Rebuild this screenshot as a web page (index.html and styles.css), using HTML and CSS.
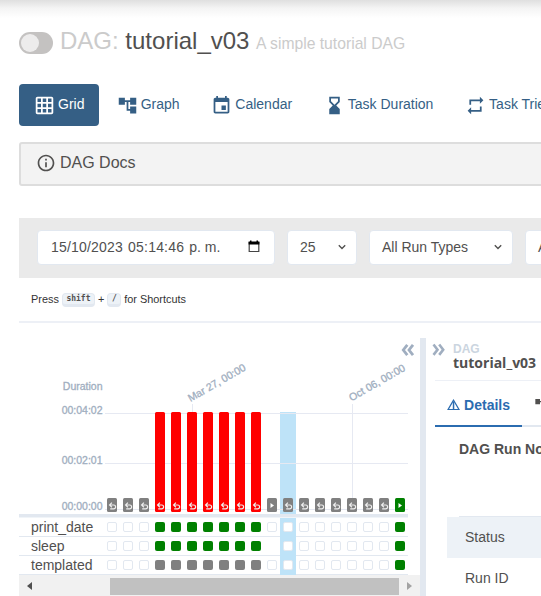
FILE: index.html
```html
<!DOCTYPE html>
<html lang="en">
<head>
<meta charset="utf-8">
<title>tutorial_v03 - Grid</title>
<link rel="stylesheet" href="styles.css">
</head>
<body>
<div class="topshade"></div>
<header class="head">
  <span class="toggle"><span class="knob"></span></span>
  <h3 class="title"><span class="muted">DAG:</span> tutorial_v03 <small class="muted">A simple tutorial DAG</small></h3>
</header>
<nav class="tabs">
  <a class="tab active"><svg class="ic" viewBox="0 0 24 24"><path d="M20 2H4c-1.100 0-2 .9-2 2v16c0 1.100.9 2 2 2h16c1.100 0 2-.9 2-2V4c0-1.100-.9-2-2-2zM8 20H4v-4h4v4zm0-6H4v-4h4v4zm0-6H4V4h4v4zm6 12h-4v-4h4v4zm0-6h-4v-4h4v4zm0-6h-4V4h4v4zm6 12h-4v-4h4v4zm0-6h-4v-4h4v4zm0-6h-4V4h4v4z"/></svg>Grid</a>
  <a class="tab"><svg class="ic" viewBox="0 0 24 24"><path d="M22 11V3h-7v3H9V3H2v8h7V8h2v10h4v3h7v-8h-7v3h-2V8h2v3z"/></svg>Graph</a>
  <a class="tab"><svg class="ic" viewBox="0 0 24 24"><path d="M17 12h-5v5h5v-5zM16 1v2H8V1H6v2H5c-1.110 0-1.990.9-1.990 2L3 19c0 1.100.89 2 2 2h14c1.100 0 2-.9 2-2V5c0-1.100-.9-2-2-2h-1V1h-2zm3 18H5V8h14v11z"/></svg>Calendar</a>
  <a class="tab"><svg class="ic" viewBox="0 0 24 24"><path d="M6 2v6l4 4-4 4v6h12v-6l-4-4 4-4V2zM8 4h8v3.200l-4 4-4-4z" fill-rule="evenodd"/></svg>Task Duration</a>
  <a class="tab"><svg class="ic" viewBox="0 0 24 24"><path d="M7 7h10v3l4-4-4-4v3H5v6h2V7zm10 10H7v-3l-4 4 4 4v-3h12v-6h-2v4z"/></svg>Task Tries</a>
</nav>
<section class="docs"><svg class="ic" viewBox="0 0 24 24"><path d="M11 7h2v2h-2zm0 4h2v6h-2zm1-9C6.480 2 2 6.480 2 12s4.480 10 10 10 10-4.480 10-10S17.520 2 12 2zm0 18c-4.410 0-8-3.590-8-8s3.590-8 8-8 8 3.590 8 8-3.590 8-8 8z"/></svg>DAG Docs</section>
<section class="filters">
  <div class="field date"><span>15/10/2023</span><span>05:14:46</span><span class="half">p. m.</span>
    <svg class="cal" viewBox="0 0 12 13"><path d="M1.200 2.500h9.600v9H1.200z" fill="none" stroke="#444" stroke-width="1.200"/><path d="M.6 1.500h10.800v3H.6zM2 .5h1.500V2H2zM8.500.5H10V2H8.500z" fill="#000"/></svg></div>
  <div class="field num">25<svg class="chev" viewBox="0 0 8 6"><path d="M.8 1.200 4 4.400l3.200-3.200"/></svg></div>
  <div class="field types">All Run Types<svg class="chev" viewBox="0 0 8 6"><path d="M.8 1.200 4 4.400l3.200-3.200"/></svg></div>
  <div class="field states">All Run States</div>
</section>
<p class="hint">Press <kbd>shift</kbd> + <kbd>/</kbd> for Shortcuts</p>
<main class="main">
  <section class="gridpane">
    <svg class="chart" viewBox="19 338 401 176" width="401" height="176">
      <defs>
        <path id="undo" d="M2.500 5H6.300a1.800 1.800 0 0 1 0 3.800H2.800M4.500 2.700 2.200 5l2.300 2.200" transform="translate(.4 2)" fill="none" stroke="#eee" stroke-width="1.200"/>
        <path id="play" d="M3.500 5v5L7 7.500z" fill="#fff"/>
      </defs>
      <path class="arrows" d="M407.300 344.800l-4 5.200 4 5.200M413 344.800l-4 5.200 4 5.200"/>
      <text class="lbl" x="102.500" y="390" text-anchor="end">Duration</text>
      <text class="lbl" x="102.500" y="414" text-anchor="end">00:04:02</text>
      <text class="lbl" x="102.500" y="464" text-anchor="end">00:02:01</text>
      <text class="lbl" x="102.500" y="510" text-anchor="end">00:00:00</text>
      <rect x="280" y="412" width="16" height="102" fill="#bee3f8"/>
      <g fill="#e6e9f2"><rect x="105" y="413" width="303" height="1"/><rect x="105" y="463" width="303" height="1"/><rect x="105" y="509" width="303" height="1"/><rect x="192" y="404" width="1" height="10"/><rect x="352" y="404" width="1" height="96"/></g>
      <text class="lbl" transform="translate(190.500 402) rotate(-30)">Mar 27, 00:00</text>
      <text class="lbl" transform="translate(351.500 401.500) rotate(-30)">Oct 06, 00:00</text>
      <g id="bars"></g>
    </svg>
    <div class="rule"></div>
    <div class="rows" id="rows"></div>
    <div class="scroll"><span class="left"></span><span class="thumb"></span><span class="right"></span></div>
  </section>
  <div class="divider"></div>
  <section class="detail">
    <div class="crumb">
      <svg class="open" viewBox="0 0 14 14"><path class="arrows" d="M1.500 1.500l4 5.200-4 5.200M7.200 1.500l4 5.200-4 5.200"/></svg>
      <div><div class="kind">DAG</div><div class="name">tutorial_v03</div></div>
    </div>
    <div class="dtabs">
      <span class="dtab on"><svg viewBox="0 0 14 13"><path d="M7 1.300 1.200 11.300h11.600z" fill="none" stroke="#2b6cb0" stroke-width="1.300"/><path d="M6.200 3h1.600v8H6.200z" fill="#2b6cb0"/></svg>Details</span>
      <span class="dtab"><svg class="ic" viewBox="0 0 24 24"><path d="M22 11V3h-7v3H9V3H2v8h7V8h2v10h4v3h7v-8h-7v3h-2V8h2v3z"/></svg>Graph</span>
    </div>
    <div class="notes">DAG Run Notes</div>
    <div class="prop shaded">Status</div>
    <div class="prop">Run ID</div>
  </section>
</main>
<script src="script.js"></script>
</body>
</html>
```
FILE: styles.css
```css
* { box-sizing: border-box; }
html, body { margin: 0; overflow: hidden; }
body { width: 541px; height: 596px; background: #fff; color: #51504f; font: 14px/20px "Liberation Sans", Arial, sans-serif; }
.topshade { height: 18px; background: linear-gradient(#dfdfdf, #f4f4f4 45%, #fff); }
.head { display: flex; align-items: center; height: 50px; padding-left: 19px; }
.toggle { width: 34px; height: 22px; margin-right: 7px; padding: 2px 1px; border-radius: 11px; background: #c4c2c1; }
.knob { display: block; width: 18px; height: 18px; margin-left: 1px; border-radius: 50%; background: #edecec; }
.title { margin: 0; padding-bottom: 2px; font-weight: 400; font-size: 24px; line-height: 28px; white-space: nowrap; }
.title small { font-size: 15.7px; }
.muted { color: #cbcbcb; }
.tabs { display: flex; gap: 2.7px; height: 42px; margin: 16px 0 0 19px; overflow: hidden; }
.tab { display: flex; align-items: center; flex: none; padding: 0 14px 2px 15px; border-radius: 4px; color: #355f85; white-space: nowrap; }
.tab .ic { position: relative; top: 1px; width: 21px; height: 21px; margin-right: 3px; fill: currentColor; }
.tab.active { width: 80px; background: #355f85; color: #fff; }
.docs { display: flex; align-items: center; height: 44px; margin: 16px -4px 0 19px; padding: 0 0 2px 15px; border: 2px solid #ddd; border-radius: 3px; background: #f3f3f3; font-size: 16px; }
.docs .ic { width: 20px; height: 20px; margin-right: 4px; fill: #51504f; }
.filters { display: flex; gap: 12px; height: 60px; margin: 32px 0 0 19px; padding: 12px 0 12px 18px; background: #eaeaea; overflow: hidden; }
.field { display: flex; align-items: center; flex: none; height: 35px; padding: 0 12px 2px; border: 1px solid #e2e8f0; border-radius: 4px; background: #fff; white-space: nowrap; }
.date { width: 238px; padding: 0 13px 2px; letter-spacing: .2px; gap: 5px; }
.date .half { letter-spacing: 0; }
.cal { width: 12px; height: 13px; margin-left: auto; margin-right: 1px; }
.num { width: 70px; }
.types { width: 144px; }
.states { width: 140px; }
.chev { width: 8px; height: 6px; margin-left: auto; margin-right: -2px; fill: none; stroke: #51504f; stroke-width: 1.4; }
.hint { height: 45px; margin: 0 0 0 19px; padding: 12px 12px 0; border-bottom: 2px solid #edf0f6; font-size: 10.9px; line-height: 18px; color: #333; white-space: nowrap; }
.hint kbd { display: inline-block; height: 14px; padding: 0 3.5px; border: 1px solid #e2e8f0; border-bottom-width: 3px; border-radius: 4px; background: #edf2f7; font: bold 8px/10px "DejaVu Sans Mono", monospace; color: #51504f; vertical-align: 2px; }
.main { display: flex; height: 258px; margin: 15px 0 0 19px; overflow: hidden; }
.gridpane { flex: none; width: 401px; }
.chart { display: block; }
.lbl { font: 10.5px "Liberation Sans", Arial, sans-serif; fill: #a0aec0; stroke: #a0aec0; stroke-width: .3; }
.arrows { fill: none; stroke: #a0aec0; stroke-width: 2.8; }
.rule { width: 389px; height: 4px; background: #e2e8f0; border-bottom: 1px solid #f0f4f8; }
.row { display: flex; width: 389px; height: 19px; border-bottom: 1px solid #e2e8f0; line-height: 18px; }
.row .label { width: 85px; padding-left: 12px; }
.cell { display: flex; align-items: center; justify-content: center; width: 16px; height: 18px; }
.cell.sel { height: 19px; padding-bottom: 1px; background: #bee3f8; }
.box { width: 10px; height: 10px; border-radius: 2px; }
.e { border: 1px solid #e2e8f0; background: #fff; }
.g { background: green; }
.s { background: gray; }
.scroll { display: flex; align-items: center; height: 22px; padding: 0 8px; background: #f1f1f1; }
.left, .right { border: 4px solid transparent; }
.left { border-left: 0; border-right: 5px solid #505050; }
.right { border-right: 0; border-left: 5px solid #a3a3a3; }
.thumb { width: 289px; height: 17px; margin: 0 8px 0 78px; background: #c1c1c1; }
.divider { flex: none; width: 6px; background: #e2e8f0; }
.detail { flex: 1; min-width: 0; padding-left: 9px; overflow: hidden; }
.crumb { display: flex; height: 43px; border-bottom: 1px solid #edf0f6; }
.open { width: 14px; height: 14px; margin: 5px 7px 0 -3px; overflow: visible; flex: none; }
.crumb .arrows { stroke-width: 2.6; }
.detail { margin-left: -6px; padding-left: 15px; }
.kind { margin-top: 4px; font-size: 12px; line-height: 14px; font-weight: 700; color: #cbd5e0; }
.name { font: 700 14px/14px "Open Sans", "Noto Sans", sans-serif; }
.dtabs { display: flex; height: 47px; }
.dtab { display: flex; flex: none; align-items: center; height: 46px; padding: 4px 12px 0 12px; border-bottom: 2px solid #e2e8f0; font-weight: 700; width: 213px; }
.dtab svg { width: 15px; height: 14px; margin-right: 4px; }
.dtab .ic { width: 16px; height: 18px; fill: #51504f; margin-right: 5px; }
.dtab.on { width: 87px; color: #2b6cb0; border-color: #2b6cb0; }
.notes { height: 89px; margin-left: 24px; padding-top: 11px; border-bottom: 1px solid #e2e8f0; font-weight: 700; white-space: nowrap; }
.prop { height: 41px; margin-left: 12px; padding-left: 18px; line-height: 41px; }
.shaded { background: #edf2f7; }
```
FILE: script.js
```js
// Run kinds: s = gray rerun, r = failed rerun, p = scheduled, g = successful scheduled
const runs = "sssrrrrrrrpsssssssg".split("");
const COL = 16, FIRST = 107;
let out = "";
runs.forEach((r, i) => {
  const x = FIRST + i * COL;
  const tall = r === "r";
  const fill = { s: "gray", p: "gray", r: "red", g: "green" }[r];
  out += `<rect x="${x}" y="${tall ? 412 : 498}" width="10" height="${tall ? 100 : 14}" rx="1.500" fill="${fill}"/>`;
  out += `<use href="#${r === "p" || r === "g" ? "play" : "undo"}" x="${x}" y="498"/>`;
});
document.getElementById("bars").innerHTML = out;

const tasks = [
  ["print_date", "eeegggggggeeeeeeeeg"],
  ["sleep", "eeeggggggg-eeeeeeeg"],
  ["templated", "eeessssssseeeeeeeeg"]
];
document.getElementById("rows").innerHTML = tasks.map(([name, states]) =>
  `<div class="row"><span class="label">${name}</span>` +
  states.split("").map((s, i) =>
    `<span class="cell${i === 11 ? " sel" : ""}">${s === "-" ? "" : `<span class="box ${s}"></span>`}</span>`).join("") +
  "</div>").join("");
```
